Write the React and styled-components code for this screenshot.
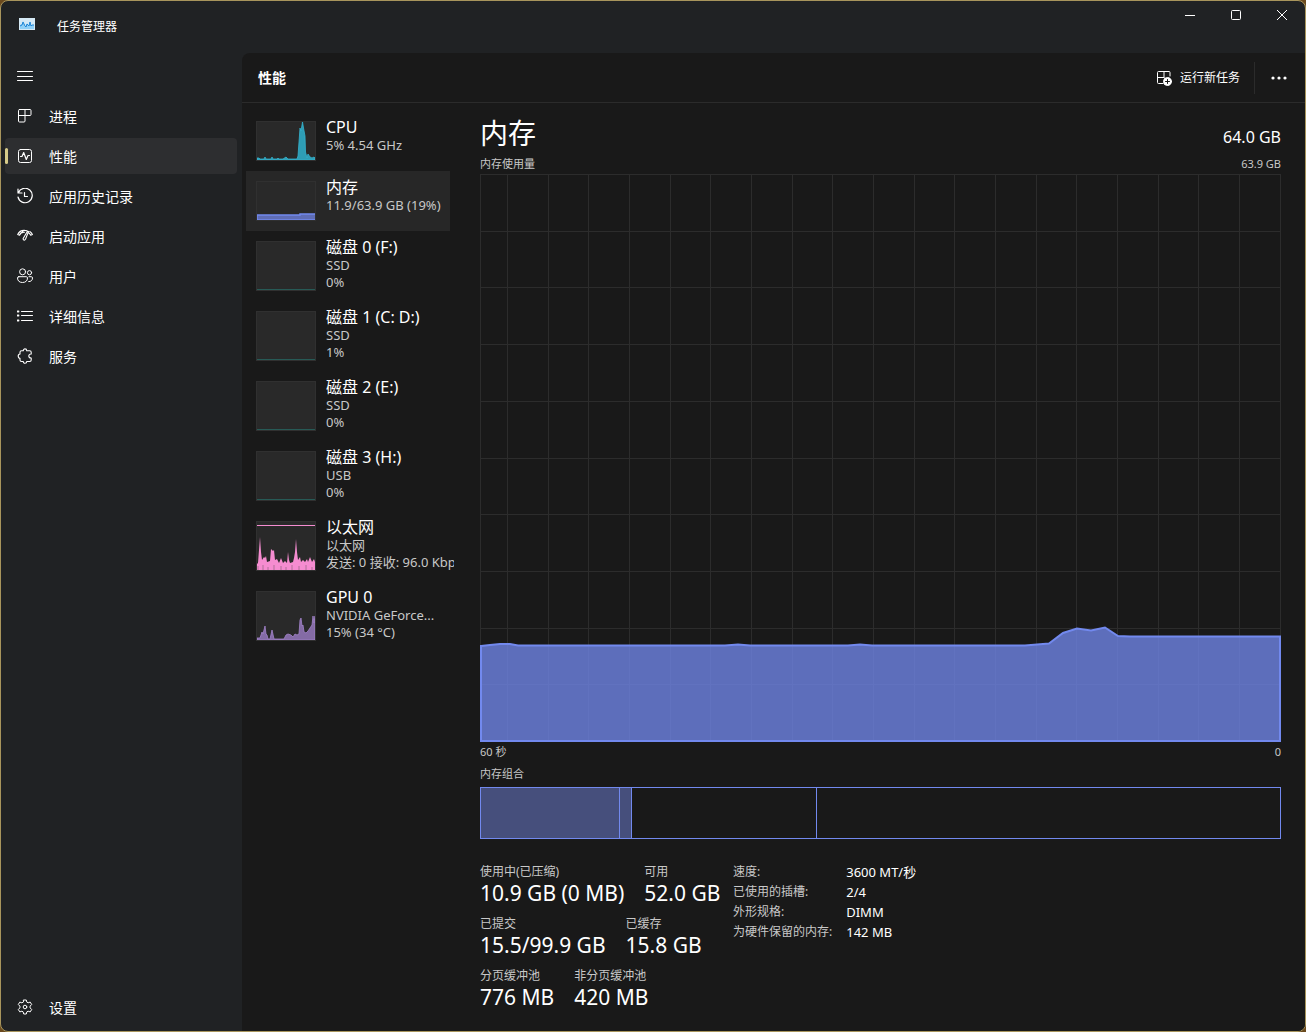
import styled, { createGlobalStyle } from "styled-components";

const GlobalStyle = createGlobalStyle`
  * {
    box-sizing: border-box;
  }

  body {
    margin: 0;
    background-color: #6b4a1e;
    color: #ffffff;
    font-family: "Noto Sans", "Noto Sans CJK SC", sans-serif;
    font-size: 12px;
  }

  button {
    border: none;
    padding: 0;
    background: none;
    color: inherit;
    font: inherit;
    text-align: left;
    cursor: pointer;
  }
`;

const Window = styled.div`
  display: flex;
  flex-direction: column;
  min-height: 100vh;
  border: 1px solid #a8955c;
  border-radius: 8px;
  background-color: #202224;
  overflow: hidden;
`;

const TitleBar = styled.header`
  display: flex;
  align-items: flex-start;
  height: 52px;
`;

const AppName = styled.div`
  flex: 1;
  display: flex;
  align-items: flex-start;
  gap: 22px;
  padding: 16px 0 0 18px;
`;

const AppTitle = styled.h1`
  margin: 0;
  font-size: 12px;
  font-weight: 400;
  line-height: 20px;
`;

const WindowButton = styled.button`
  display: flex;
  align-items: center;
  justify-content: center;
  width: 46px;
  height: 28px;
`;

const Body = styled.div`
  flex: 1;
  display: flex;
`;

const Sidebar = styled.nav`
  display: flex;
  flex-direction: column;
  gap: 4px;
  width: 241px;
  padding: 5px 5px 6px 4px;
`;

const NavButton = styled.button`
  position: relative;
  display: flex;
  align-items: center;
  gap: 16px;
  height: 36px;
  padding-left: 12px;
  border-radius: 4px;
  background-color: ${({ $active }) => ($active ? "#2d2e30" : "transparent")};
  font-size: 14px;
  line-height: 20px;

  &::before {
    content: "";
    display: ${({ $active }) => ($active ? "block" : "none")};
    position: absolute;
    left: 0;
    top: 10px;
    width: 3px;
    height: 16px;
    border-radius: 2px;
    background-color: #d6cb8a;
  }
`;

const NavLabel = styled.span`
  padding-top: 2px;
`;

const Spacer = styled.div`
  flex: 1;
`;

const Panel = styled.main`
  flex: 1;
  min-width: 0;
  display: flex;
  flex-direction: column;
  border-top-left-radius: 8px;
  background-color: #191919;
`;

const Toolbar = styled.div`
  display: flex;
  align-items: center;
  height: 50px;
  padding: 0 13px 0 16px;
  border-bottom: 1px solid #2b2b2b;
`;

const ToolbarTitle = styled.h2`
  flex: 1;
  margin: 0;
  font-size: 14px;
  font-weight: 700;
  line-height: 20px;
`;

const ToolbarButton = styled.button`
  display: flex;
  align-items: center;
  gap: 8px;
  height: 32px;
  padding: 0 14px;
  line-height: 20px;
`;

const MoreButton = styled.button`
  display: flex;
  align-items: center;
  height: 32px;
  padding: 0 5px 0 16px;
  border-left: 1px solid #2b2b2b;
`;

const Content = styled.div`
  flex: 1;
  display: flex;
`;

const DeviceList = styled.div`
  flex: none;
  width: 212px;
  padding: 8px 0 0 4px;
  overflow: hidden;
`;

const DeviceButton = styled.button`
  display: flex;
  align-items: flex-start;
  gap: 10px;
  width: 204px;
  height: ${({ $tall }) => ($tall ? "70px" : "60px")};
  padding: 6px 0 0 10px;
  background-color: ${({ $active }) => ($active ? "#272727" : "transparent")};
  white-space: nowrap;
`;

const Thumb = styled.svg`
  flex: none;
  width: 60px;
  margin-top: 4px;
  height: ${({ $tall }) => ($tall ? "50px" : "40px")};
  border: 1px solid #303030;
  background-color: #292929;
`;

const DeviceText = styled.span`
  display: flex;
  flex-direction: column;
`;

const DeviceName = styled.span`
  font-size: 16px;
  line-height: 20px;
`;

const DeviceLine = styled.span`
  color: #c8c8c8;
  font-size: 13px;
  line-height: 17px;
`;

const Detail = styled.section`
  flex: 1;
  min-width: 0;
  display: flex;
  flex-direction: column;
  padding: 11px 24px 23px 26px;
`;

const DetailHead = styled.div`
  display: flex;
  align-items: flex-end;
  justify-content: space-between;
  padding-bottom: 3px;
`;

const DetailTitle = styled.h2`
  margin: 0;
  font-size: 28px;
  font-weight: 400;
  line-height: 38px;
`;

const Capacity = styled.span`
  padding-bottom: 4px;
  font-size: 16px;
  line-height: 22px;
`;

const Caption = styled.div`
  display: flex;
  justify-content: space-between;
  color: #c8c8c8;
  font-size: 11px;
  line-height: 16px;
  padding: 1px 0 2px;
`;

const AxisCaption = styled(Caption)`
  padding: 2px 0 5px;
`;

const Chart = styled.svg`
  flex: 1;
  display: block;
  width: 100%;
  min-height: 240px;
`;

const Composition = styled.div`
  display: flex;
  height: 52px;
  margin: 3px 0 23px;
  border: 1px solid #7289ee;
`;

const Segment = styled.div`
  flex: ${({ $size }) => $size} 1 0;
  border-right: 1px solid #7289ee;
  background-color: ${({ $used }) => ($used ? "#464f7c" : "transparent")};

  &:last-child {
    border-right: none;
  }
`;

const Footer = styled.div`
  display: flex;
  align-items: flex-start;
`;

const Stats = styled.div`
  display: flex;
  flex-direction: column;
  gap: 10px;
  width: 253px;
`;

const StatRow = styled.dl`
  display: flex;
  gap: 20px;
  margin: 0;
  white-space: nowrap;
`;

const StatLabel = styled.dt`
  color: #c8c8c8;
  line-height: 20px;
`;

const StatValue = styled.dd`
  margin: 0;
  font-size: 21px;
  line-height: 22px;
`;

const Hardware = styled.table`
  border-collapse: collapse;
  line-height: 20px;
  white-space: nowrap;

  th {
    padding: 0 14px 0 0;
    color: #c8c8c8;
    font-weight: 400;
    text-align: left;
  }

  td {
    padding: 0;
    font-size: 13px;
  }
`;

const Icon = ({ children, size = 16 }) => (
  <svg
    width={size}
    height={size}
    viewBox="0 0 16 16"
    fill="none"
    stroke="currentColor"
    strokeLinecap="round"
    strokeLinejoin="round"
    aria-hidden="true"
  >
    {children}
  </svg>
);

const icons = {
  menu: <path d="M0.5 3.5h15M0.5 8.5h15M0.5 12.5h15" />,
  processes: (
    <path d="M2.5 1.5h10.5q1 0 1 1v4q0 1-1 1H8v5.500q0 1-1 1H2.500q-1 0-1-1V2.500q0-1 1-1zM8 1.500v6M1.500 7.500H8" />
  ),
  performance: (
    <>
      <rect x="1.5" y="1.5" width="13" height="13" rx="2" />
      <path d="M3.500 8.500h1.500l1.700-4 2.600 7 1.700-4h1.500" strokeWidth="1.200" />
    </>
  ),
  history: (
    <>
      <path d="M1 1v4h4M1.400 4.700A7.200 7.200 0 1 1 1 9" strokeWidth="1.200" />
      <path d="M7.500 4.500v4h3" strokeWidth="1.200" />
    </>
  ),
  startup: (
    <path
      d="M0.700 6.500C2.500 2.500 6 1.800 10 2.700M0.700 6.500l1.800 0.700C3.300 5 5 4 7.500 4.200M5 2.500l0.800 1.800M10.500 3.200L6.300 10.300c-0.700 1.600 1.300 2.500 2.200 1L11.500 3.600zM12.800 3.500c1.300 0.800 2.100 1.800 2.600 3l-1.700 0.800c-0.400-1-1-1.700-1.800-2.300"
      strokeWidth="1.100"
    />
  ),
  users: (
    <>
      <circle cx="5.600" cy="3.800" r="3" />
      <circle cx="12.500" cy="4.700" r="2.100" />
      <path d="M1.800 8.700h7.500q1.200 0 1.200 1.200c0 3-2 4.600-5 4.600s-5-1.600-5-4.600q0-1.200 1.300-1.200zM12 8.700h2.300q1.200 0 1.200 1.200c0 2.400-1.400 3.800-3.800 3.700" />
    </>
  ),
  details: (
    <>
      <path d="M4.500 3.500h11M4.500 7.500h11M4.500 12.500h11" />
      <path d="M0.500 3.500h1M0.500 7.500h1M0.500 12.500h1" strokeWidth="1.800" />
    </>
  ),
  services: (
    <path
      d="M4.500 2.700H6.300C6.300 0.200 9.700 0.200 9.700 2.700H12.700q1.500 0 1.500 1.500V6C11 6 11 10 14.200 10v2q0 1.500-1.500 1.500H9.700C9.700 15.900 6.300 15.900 6.300 13.500H4.500Q3 13.500 3 12V10.200C0.600 10.200 0.600 6 3 6V4.200Q3 2.700 4.500 2.700z"
      strokeWidth="1.100"
    />
  ),
  settings: (
    <>
      <circle cx="8" cy="8" r="1.800" />
      <path d="M6.700 1h2.600l0.500 2.100 1.300 0.700 2.100-0.700 1.500 2.400-1.600 1.600v1.800l1.600 1.600-1.500 2.400-2.100-0.700-1.300 0.700L9.300 15H6.700l-0.500-2.100-1.300-0.700-2.100 0.700-1.500-2.400 1.600-1.600V7.100L1.300 5.500l1.500-2.400 2.100 0.700 1.300-0.700z" />
    </>
  ),
};

const navItems = [
  { icon: "processes", label: "进程" },
  { icon: "performance", label: "性能", active: true },
  { icon: "history", label: "应用历史记录" },
  { icon: "startup", label: "启动应用" },
  { icon: "users", label: "用户" },
  { icon: "details", label: "详细信息" },
  { icon: "services", label: "服务" },
];

const diskGraph = <path d="M0 47.500H58" stroke="#275a56" fill="none" />;

const devices = [
  {
    name: "CPU",
    lines: ["5% 4.54 GHz"],
    graph: (
      <path
        d="M0 38V36L2 36 3 37H7L8 35 9 37H14L15 35 16 37H20L21 36 22 37H26L29 35 31 37H40L41 34 43 6 44 9 45.500 0 46.500 6 48 14 48.500 30 50 36 51 32 53 35 55 36 57 35 58 36V38z"
        fill="#2e9db5"
        stroke="#35b4cf"
        strokeWidth="0.800"
      />
    ),
  },
  {
    name: "内存",
    active: true,
    lines: ["11.9/63.9 GB (19%)"],
    graph: <path d="M0 38V33H43V32H59V38z" fill="#5f6db6" stroke="#7289ee" strokeWidth="1.500" />,
  },
  { name: "磁盘 0 (F:)", lines: ["SSD", "0%"], graph: diskGraph },
  { name: "磁盘 1 (C: D:)", lines: ["SSD", "1%"], graph: diskGraph },
  { name: "磁盘 2 (E:)", lines: ["SSD", "0%"], graph: diskGraph },
  { name: "磁盘 3 (H:)", lines: ["USB", "0%"], graph: diskGraph },
  {
    name: "以太网",
    lines: ["以太网", "发送: 0 接收: 96.0 Kbps"],
    graph: (
      <>
        <path d="M0 3.500H58" stroke="#f58cd0" />
        <path
          d="M0 48V42L1 41 3 15 4 30 5 38 7 35 8 36 9 34 10 40 13 39 14 27 16 29 17 28 18 38 20 37 22 41 24 36 26 41 28 39 30 41 31 30 32 38 33 41 36 40 37 36 38 30 39 17 40 30 41 38 43 35 44 40 46 38 48 40 50 37 51 40 53 35 55 40 57 37 58 40V48z"
          fill="#f58cd0"
        />
        <path d="M1 48V44M6 48V43M11 48V45M17 48V43M24 48V44M29 48V45M35 48V43M42 48V44M49 48V43M55 48V45" stroke="#b06e98" />
      </>
    ),
  },
  {
    name: "GPU 0",
    lines: ["NVIDIA GeForce...", "15% (34 °C)"],
    graph: (
      <path
        d="M0 48V46H3L5 40 6 42 8 34 9 42 10 43 11 47H13L15 38 17 47H27L29 43 31 42 34 43 36 45 38 42 40 43 42 42 43 28 44 26 45 34 46 33 47 40 49 41 51 39 53 36 55 33 56 24 57 31 58 24V48z"
        fill="#846ba5"
        stroke="#a384cc"
        strokeWidth="0.800"
      />
    ),
  },
];

const statRows = [
  [
    ["使用中(已压缩)", "10.9 GB (0 MB)"],
    ["可用", "52.0 GB"],
  ],
  [
    ["已提交", "15.5/99.9 GB"],
    ["已缓存", "15.8 GB"],
  ],
  [
    ["分页缓冲池", "776 MB"],
    ["非分页缓冲池", "420 MB"],
  ],
];

const hardware = [
  ["速度:", "3600 MT/秒"],
  ["已使用的插槽:", "2/4"],
  ["外形规格:", "DIMM"],
  ["为硬件保留的内存:", "142 MB"],
];

const composition = [
  { size: 138, used: true },
  { size: 11, used: true },
  { size: 185 },
  { size: 464 },
];

const usageLine =
  "M1 472L10 471 20 470H30L38 471.500H245L258 470.500 270 471.500H368L380 470.500 392 471.500H545L569 469.500 583 459 597 454.500 611 456.500 625 453.500 638 462 650 462.500H800";

const gridRows = Array.from({ length: 9 }, (_, i) => Math.round((i + 1) * 56.7) + 0.5);
const gridCols = Array.from({ length: 19 }, (_, i) => Math.round(27 + i * 40.67) + 0.5);

const UsageChart = () => (
  <Chart viewBox="0 0 801 568" preserveAspectRatio="none" role="img" aria-label="内存使用量">
    <g stroke="#2c2c2c" shapeRendering="crispEdges" fill="none">
      <rect x="0.5" y="0.5" width="800" height="567" />
      {gridRows.map((y) => (
        <path key={y} d={`M0 ${y}H801`} />
      ))}
      {gridCols.map((x) => (
        <path key={x} d={`M${x} 0V568`} />
      ))}
    </g>
    <path d={`${usageLine}V567H1z`} fill="#7289ee" fillOpacity="0.760" />
    <path d={`${usageLine}V567H1z`} fill="none" stroke="#7289ee" strokeWidth="2" />
  </Chart>
);

const App = () => (
  <>
    <GlobalStyle />
    <Window>
      <TitleBar>
        <AppName>
          <svg width="16" height="14" viewBox="0 0 16 14" aria-hidden="true">
            <rect y="1" width="16" height="12" fill="#d5e9f5" />
            <path d="M1 12V8l2-1 1-3 2 5 1 1 1-4 2 3 1-5 1 5 1-1 2 0v4z" fill="#8fd0f7" />
            <path d="M1 9l2-1 1-3 2 4 1 1 1-3 2 2 1-4 1 4 1-1h2" fill="none" stroke="#1f86d6" />
          </svg>
          <AppTitle>任务管理器</AppTitle>
        </AppName>
        <WindowButton aria-label="最小化">
          <svg width="10" height="10" viewBox="0 0 10 10" stroke="currentColor">
            <path d="M0 5.500h10" />
          </svg>
        </WindowButton>
        <WindowButton aria-label="最大化">
          <svg width="10" height="10" viewBox="0 0 10 10" stroke="currentColor" fill="none">
            <rect x="0.500" y="0.500" width="9" height="9" rx="1" />
          </svg>
        </WindowButton>
        <WindowButton aria-label="关闭">
          <svg width="10" height="10" viewBox="0 0 10 10" stroke="currentColor">
            <path d="M0 0l10 10M10 0L0 10" />
          </svg>
        </WindowButton>
      </TitleBar>

      <Body>
        <Sidebar>
          <NavButton aria-label="菜单">
            <Icon>{icons.menu}</Icon>
          </NavButton>
          {navItems.map((item) => (
            <NavButton key={item.label} $active={item.active}>
              <Icon>{icons[item.icon]}</Icon>
              <NavLabel>{item.label}</NavLabel>
            </NavButton>
          ))}
          <Spacer />
          <NavButton>
            <Icon>{icons.settings}</Icon>
            <NavLabel>设置</NavLabel>
          </NavButton>
        </Sidebar>

        <Panel>
          <Toolbar>
            <ToolbarTitle>性能</ToolbarTitle>
            <ToolbarButton>
              <Icon>
                <path d="M7 13.500H2.500q-1 0-1-1v-10q0-1 1-1h10.500q1 0 1 1V6M8 1.500v6M1.500 7.500H8" />
                <circle cx="11.500" cy="11.500" r="4" fill="#ffffff" />
                <path d="M11.500 9.500v4M9.500 11.500h4" stroke="#191919" />
              </Icon>
              运行新任务
            </ToolbarButton>
            <MoreButton aria-label="更多">
              <svg width="16" height="16" viewBox="0 0 16 16" fill="currentColor">
                <circle cx="2" cy="8" r="1.600" />
                <circle cx="8" cy="8" r="1.600" />
                <circle cx="14" cy="8" r="1.600" />
              </svg>
            </MoreButton>
          </Toolbar>

          <Content>
            <DeviceList>
              {devices.map((device) => {
                const tall = device.lines.length > 1;
                return (
                  <DeviceButton key={device.name} $tall={tall} $active={device.active}>
                    <Thumb $tall={tall} viewBox={tall ? "0 0 58 48" : "0 0 58 38"} aria-hidden="true">
                      {device.graph}
                    </Thumb>
                    <DeviceText>
                      <DeviceName>{device.name}</DeviceName>
                      {device.lines.map((line) => (
                        <DeviceLine key={line}>{line}</DeviceLine>
                      ))}
                    </DeviceText>
                  </DeviceButton>
                );
              })}
            </DeviceList>

            <Detail>
              <DetailHead>
                <DetailTitle>内存</DetailTitle>
                <Capacity>64.0 GB</Capacity>
              </DetailHead>
              <Caption>
                <span>内存使用量</span>
                <span>63.9 GB</span>
              </Caption>
              <UsageChart />
              <AxisCaption>
                <span>60 秒</span>
                <span>0</span>
              </AxisCaption>
              <Caption>内存组合</Caption>
              <Composition>
                {composition.map(({ size, used }) => (
                  <Segment key={size} $size={size} $used={used} />
                ))}
              </Composition>

              <Footer>
                <Stats>
                  {statRows.map((row) => (
                    <StatRow key={row[0][0]}>
                      {row.map(([label, value]) => (
                        <div key={label}>
                          <StatLabel>{label}</StatLabel>
                          <StatValue>{value}</StatValue>
                        </div>
                      ))}
                    </StatRow>
                  ))}
                </Stats>
                <Hardware>
                  <tbody>
                    {hardware.map(([label, value]) => (
                      <tr key={label}>
                        <th scope="row">{label}</th>
                        <td>{value}</td>
                      </tr>
                    ))}
                  </tbody>
                </Hardware>
              </Footer>
            </Detail>
          </Content>
        </Panel>
      </Body>
    </Window>
  </>
);

export default App;
